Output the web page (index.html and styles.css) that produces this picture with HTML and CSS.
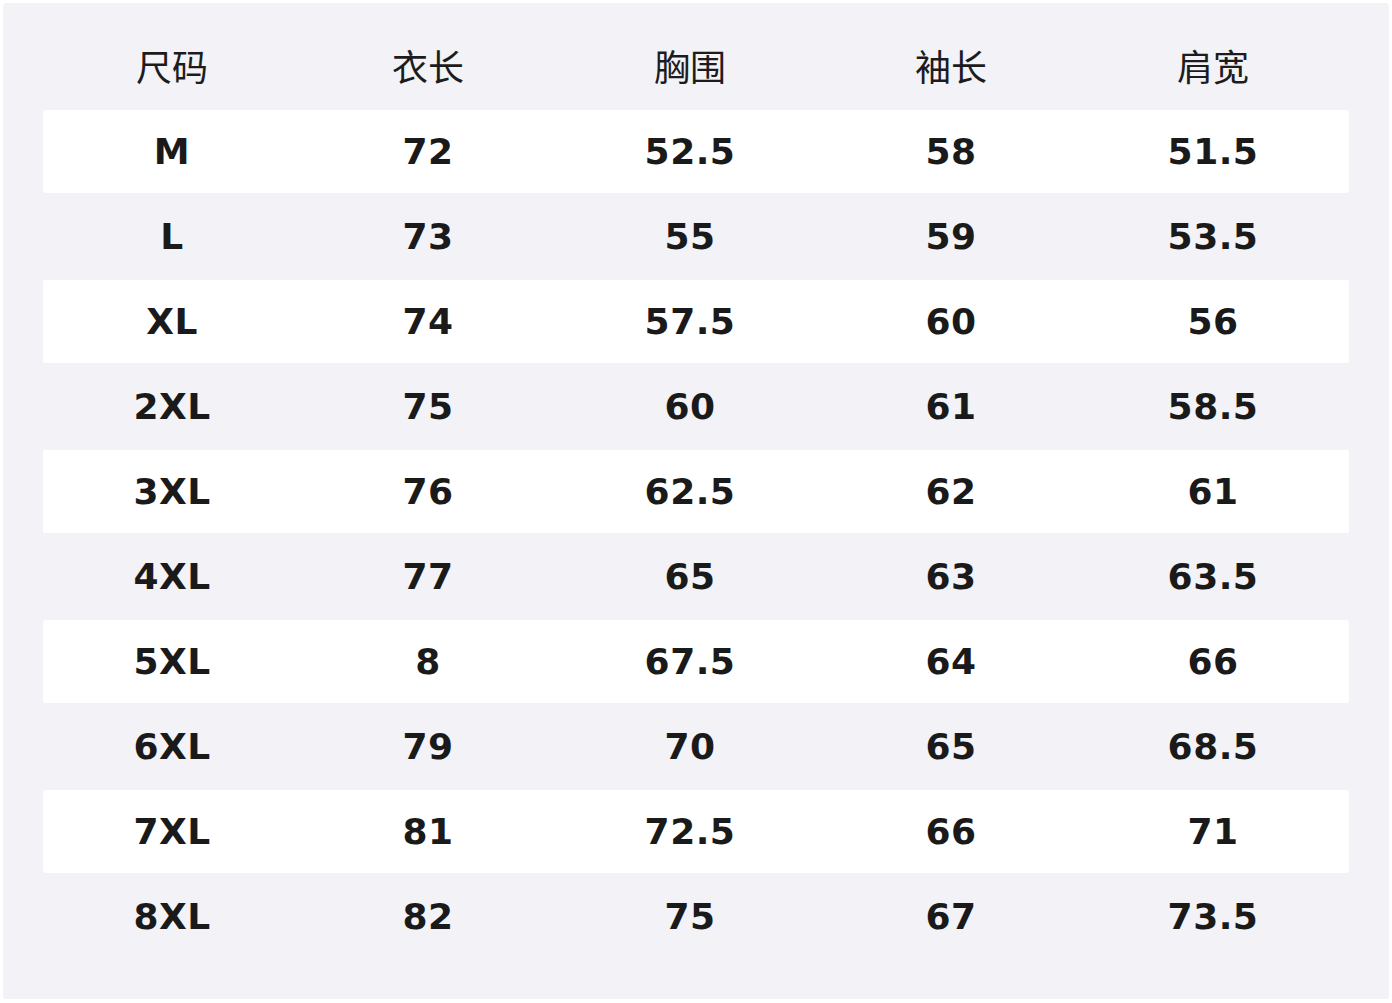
FILE: index.html
```html
<!DOCTYPE html>
<html lang="zh">
<head>
<meta charset="utf-8">
<link rel="stylesheet" href="styles.css">
</head>
<body>
<div class="panel">
  <div class="table">
    <div class="row head"><div>尺码</div><div>衣长</div><div>胸围</div><div>袖长</div><div>肩宽</div></div>
    <div class="row odd"><div>M</div><div>72</div><div>52.5</div><div>58</div><div>51.5</div></div>
    <div class="row even"><div>L</div><div>73</div><div>55</div><div>59</div><div>53.5</div></div>
    <div class="row odd"><div>XL</div><div>74</div><div>57.5</div><div>60</div><div>56</div></div>
    <div class="row even"><div>2XL</div><div>75</div><div>60</div><div>61</div><div>58.5</div></div>
    <div class="row odd"><div>3XL</div><div>76</div><div>62.5</div><div>62</div><div>61</div></div>
    <div class="row even"><div>4XL</div><div>77</div><div>65</div><div>63</div><div>63.5</div></div>
    <div class="row odd"><div>5XL</div><div>8</div><div>67.5</div><div>64</div><div>66</div></div>
    <div class="row even"><div>6XL</div><div>79</div><div>70</div><div>65</div><div>68.5</div></div>
    <div class="row odd"><div>7XL</div><div>81</div><div>72.5</div><div>66</div><div>71</div></div>
    <div class="row even"><div>8XL</div><div>82</div><div>75</div><div>67</div><div>73.5</div></div>
  </div>
</div>
</body>
</html>
```
FILE: styles.css
```css
html, body {
  margin: 0;
  padding: 0;
  background: #ffffff;
}
body {
  padding: 3px;
}
.panel {
  width: 1386px;
  height: 996px;
  box-sizing: border-box;
  background: #f2f2f7;
  border-radius: 4px;
  padding: 22px 40px 0 40px;
}
.table {
  width: 1306px;
}
.row {
  display: grid;
  grid-template-columns: 258px 254px 270px 252px 272px;
  align-items: center;
  justify-items: center;
  font-family: "DejaVu Sans", sans-serif;
  font-weight: bold;
  font-size: 36px;
  color: #1a1a1a;
  letter-spacing: 0.5px;
}
.row.head {
  height: 85px;
  box-sizing: border-box;
  padding-bottom: 6px;
  font-family: "Noto Sans CJK SC", sans-serif;
  font-weight: normal;
  font-size: 36px;
  color: #1c1c1e;
  letter-spacing: 0;
}
.row.odd {
  height: 83px;
  background: #ffffff;
  border-radius: 2px;
}
.row.even {
  height: 87px;
}
```
